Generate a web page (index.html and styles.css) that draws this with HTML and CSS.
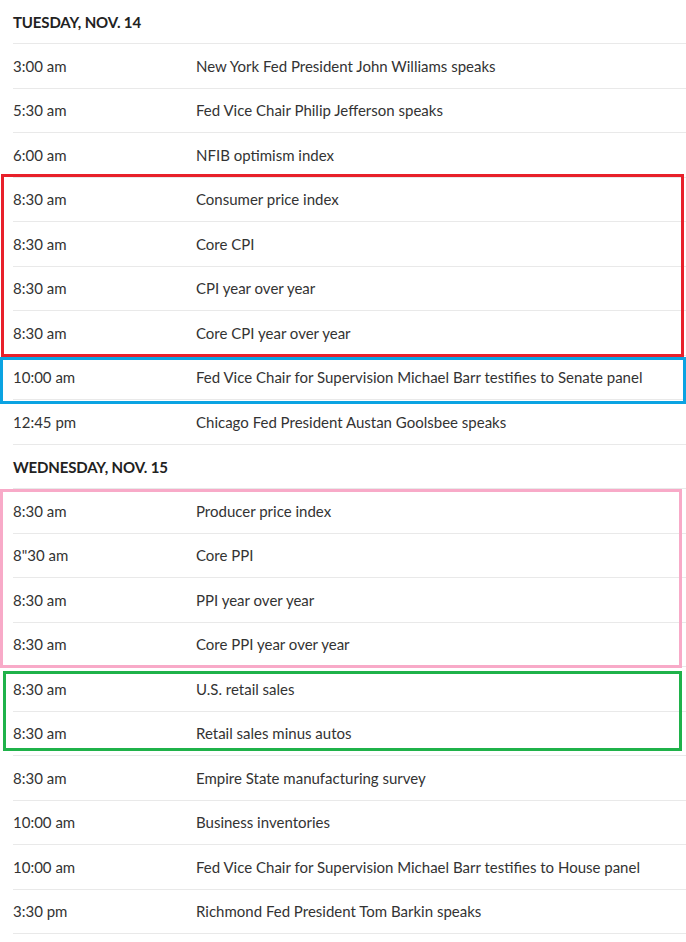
FILE: index.html
```html
<!DOCTYPE html>
<html>
<head>
<meta charset="utf-8">
<link rel="stylesheet" href="styles.css">
</head>
<body>
<div class="schedule">
  <div class="day">TUESDAY, NOV. 14</div>
  <div class="row"><span class="time">3:00 am</span><span class="event">New York Fed President John Williams speaks</span></div>
  <div class="row"><span class="time">5:30 am</span><span class="event">Fed Vice Chair Philip Jefferson speaks</span></div>
  <div class="row"><span class="time">6:00 am</span><span class="event">NFIB optimism index</span></div>
  <div class="group red">
    <div class="row"><span class="time">8:30 am</span><span class="event">Consumer price index</span></div>
    <div class="row"><span class="time">8:30 am</span><span class="event">Core CPI</span></div>
    <div class="row"><span class="time">8:30 am</span><span class="event">CPI year over year</span></div>
    <div class="row"><span class="time">8:30 am</span><span class="event">Core CPI year over year</span></div>
  </div>
  <div class="group blue">
    <div class="row"><span class="time">10:00 am</span><span class="event">Fed Vice Chair for Supervision Michael Barr testifies to Senate panel</span></div>
  </div>
  <div class="row"><span class="time">12:45 pm</span><span class="event">Chicago Fed President Austan Goolsbee speaks</span></div>
  <div class="day day2">WEDNESDAY, NOV. 15</div>
  <div class="group pink">
    <div class="row"><span class="time">8:30 am</span><span class="event">Producer price index</span></div>
    <div class="row"><span class="time">8"30 am</span><span class="event">Core PPI</span></div>
    <div class="row"><span class="time">8:30 am</span><span class="event">PPI year over year</span></div>
    <div class="row"><span class="time">8:30 am</span><span class="event">Core PPI year over year</span></div>
  </div>
  <div class="group green">
    <div class="row"><span class="time">8:30 am</span><span class="event">U.S. retail sales</span></div>
    <div class="row"><span class="time">8:30 am</span><span class="event">Retail sales minus autos</span></div>
  </div>
  <div class="row"><span class="time">8:30 am</span><span class="event">Empire State manufacturing survey</span></div>
  <div class="row"><span class="time">10:00 am</span><span class="event">Business inventories</span></div>
  <div class="row"><span class="time">10:00 am</span><span class="event">Fed Vice Chair for Supervision Michael Barr testifies to House panel</span></div>
  <div class="row"><span class="time">3:30 pm</span><span class="event">Richmond Fed President Tom Barkin speaks</span></div>
</div>
</body>
</html>
```
FILE: styles.css
```css
html, body {
  margin: 0;
  padding: 0;
  background: #ffffff;
}
body {
  font-family: Lato, "Open Sans", sans-serif;
  color: #333333;
  font-size: 15px;
  overflow: hidden;
}
.schedule {
  padding-left: 13px;
}
.day {
  border-bottom: 1px solid #e9e9e9;
  display: flex;
  align-items: center;
  font-weight: 700;
  font-size: 15px;
  letter-spacing: -0.15px;
  color: #222222;
  padding-top: 1px;
  box-sizing: border-box;
  height: 44px;
}
.day2 {
  height: 44.5px;
}
.row {
  height: 44.5px;
  box-sizing: border-box;
  border-bottom: 1px solid #e9e9e9;
  display: flex;
  align-items: center;
}
.time {
  width: 183px;
  flex: none;
}
.event {
  white-space: nowrap;
}
.group {
  position: relative;
}
.group::after {
  content: "";
  position: absolute;
  pointer-events: none;
  border: 3px solid;
  box-sizing: border-box;
}
.red::after {
  border-color: #e8202a;
  top: -4px;
  left: -12px;
  width: 683px;
  bottom: -1px;
}
.blue::after {
  border-color: #0ba3e2;
  top: 1px;
  left: -13px;
  width: 686px;
  bottom: -4px;
}
.pink::after {
  border-color: #f8aac8;
  top: 0px;
  left: -13px;
  width: 682px;
  bottom: -1px;
}
.green::after {
  border-color: #1fb24a;
  top: 4px;
  left: -10px;
  width: 679px;
  bottom: 5px;
}
```
